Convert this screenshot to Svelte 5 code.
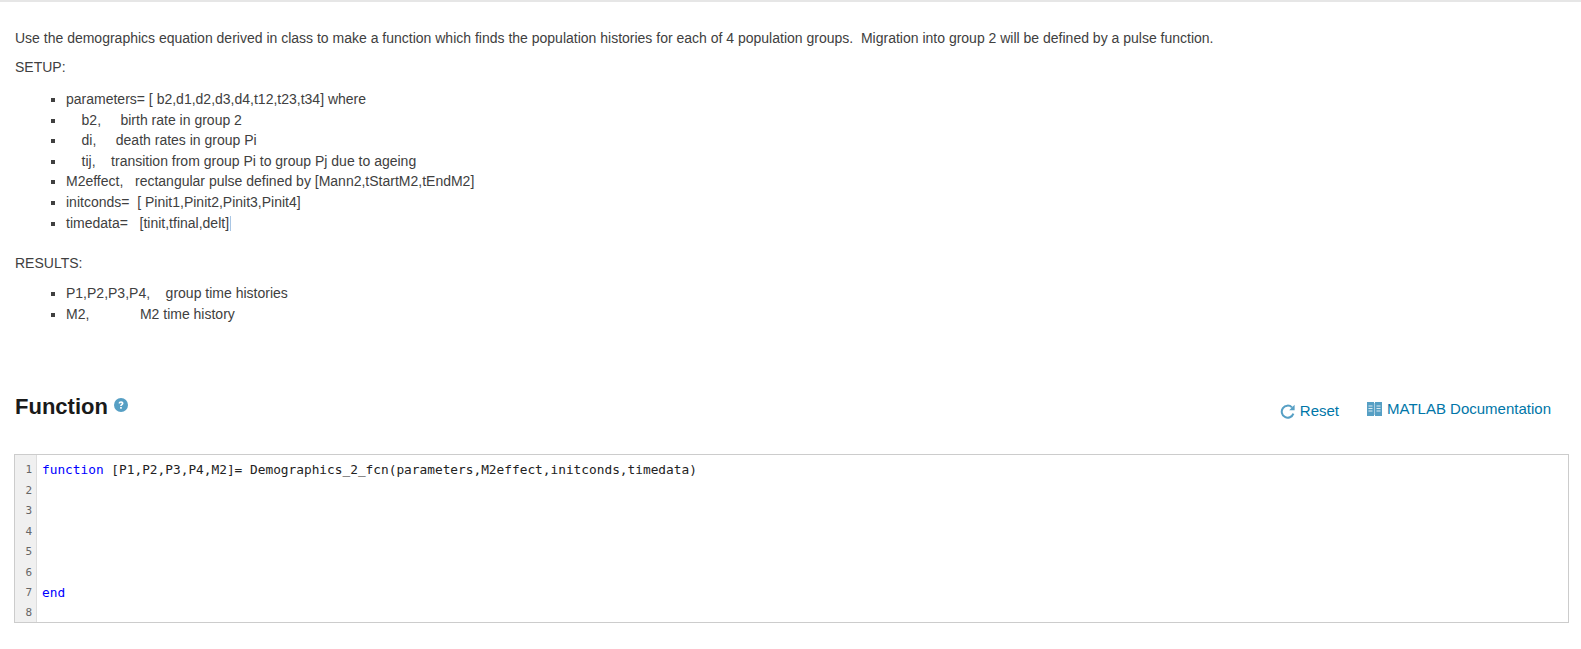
<script>
	const setup = [
		'parameters= [ b2,d1,d2,d3,d4,t12,t23,t34] where',
		'\u00a0\u00a0\u00a0 b2,\u00a0\u00a0\u00a0\u00a0 birth rate in group 2',
		'\u00a0\u00a0\u00a0 di,\u00a0\u00a0\u00a0\u00a0 death rates in group Pi',
		'\u00a0\u00a0\u00a0 tij,\u00a0\u00a0\u00a0 transition from group Pi to group Pj due to ageing',
		'M2effect,\u00a0\u00a0 rectangular pulse defined by [Mann2,tStartM2,tEndM2]',
		'initconds=\u00a0 [ Pinit1,Pinit2,Pinit3,Pinit4]'
	];
	const results = [
		'P1,P2,P3,P4,\u00a0\u00a0\u00a0 group time histories',
		'M2,\u00a0\u00a0\u00a0\u00a0\u00a0\u00a0\u00a0\u00a0\u00a0\u00a0\u00a0\u00a0 M2 time history'
	];
	const lineNumbers = [1, 2, 3, 4, 5, 6, 7, 8];
</script>

<div class="page">
	<div class="description">
		<p class="intro">Use the demographics equation derived in class to make a function which finds the population histories for each of 4 population groups.&nbsp; Migration into group 2 will be defined by a pulse function.</p>
		<p class="label">SETUP:</p>
		<ul>
			{#each setup as item}
				<li>{item}</li>
			{/each}
			<li>timedata=&nbsp;&nbsp; [tinit,tfinal,delt]<span class="caret"></span></li>
		</ul>
		<p class="label results">RESULTS:</p>
		<ul class="results-list">
			{#each results as item}
				<li>{item}</li>
			{/each}
		</ul>
	</div>

	<div class="function-head">
		<h2>Function
			<svg class="help" width="14" height="14" viewBox="0 0 14 14" aria-hidden="true">
				<circle cx="7" cy="7" r="7" fill="#569fc4" />
				<path d="M4.6 5.4c0-1.4 1.1-2.2 2.5-2.2 1.3 0 2.4.8 2.4 2 0 1.8-1.8 1.6-1.8 2.9H6.1c0-2 1.6-1.9 1.6-2.7 0-.4-.3-.7-.7-.7-.5 0-.8.3-.8.9z" fill="#fff" />
				<rect x="6.1" y="9" width="1.7" height="1.7" fill="#fff" />
			</svg>
		</h2>
		<div class="actions">
			<a class="action reset" href="#reset">
				<svg width="15" height="15" viewBox="0 0 15 15" fill="none" aria-hidden="true">
					<path d="M13.4 9.6A6 6 0 1 1 12 3.4" stroke="#569fc4" stroke-width="2" />
					<path d="M14.6 .8v5.4H9.2z" fill="#569fc4" />
				</svg>
				Reset
			</a>
			<a class="action" href="#doc">
				<svg width="15" height="14" viewBox="0 0 15 14" aria-hidden="true">
					<path d="M0 0h7v14H0zM8 0h7v14H8z" fill="#569fc4" />
					<path d="M7 1h1v12H7z" fill="#a9cde0" />
					<path d="M1.5 4h4M1.5 6.5h4M1.5 9h4M9.5 4h4M9.5 6.5h4M9.5 9h4" stroke="#dcebf3" />
				</svg>
				MATLAB Documentation
			</a>
		</div>
	</div>

	<div class="editor">
		<div class="gutter">
			{#each lineNumbers as n}
				<div>{n}</div>
			{/each}
		</div>
		<div class="code">
			<div><span class="kw">function</span> [P1,P2,P3,P4,M2]= Demographics_2_fcn(parameters,M2effect,initconds,timedata)</div>
			<div>&nbsp;</div>
			<div>&nbsp;</div>
			<div>&nbsp;</div>
			<div>&nbsp;</div>
			<div>&nbsp;</div>
			<div><span class="kw">end</span></div>
			<div>&nbsp;</div>
		</div>
	</div>
</div>

<style>
	:global(body) {
		background: #fff;
	}

	.page {
		height: 649px;
		overflow: hidden;
		border-top: 2px solid #e6e6e6;
		box-sizing: border-box;
		font-family: Arial, "Liberation Sans", sans-serif;
		font-size: 14px;
		line-height: 20px;
		color: #404040;
	}

	.description {
		padding: 26px 15px 0;
	}

	p {
		margin: 0;
	}

	.intro {
		margin-bottom: 9px;
	}

	.label.results {
		margin-top: 20px;
	}

	ul {
		list-style: square;
		margin: 12px 0 0;
		padding-left: 51px;
		line-height: 20.6px;
	}

	.results-list {
		margin-top: 10px;
	}

	.caret {
		display: inline-block;
		width: 1px;
		height: 15px;
		margin-left: 1px;
		vertical-align: -3px;
		background: #a9c6e4;
	}

	.function-head {
		display: flex;
		justify-content: space-between;
		align-items: flex-start;
		margin-top: 68px;
		padding: 0 30px 0 15px;
	}

	h2 {
		margin: 0;
		font-size: 22px;
		line-height: 30px;
		font-weight: 700;
		color: #1a1a1a;
	}

	.help {
		vertical-align: 2px;
	}

	.actions {
		display: flex;
		align-items: flex-start;
		gap: 28px;
		font-size: 15px;
		padding-top: 7px;
	}

	.action {
		display: flex;
		align-items: center;
		gap: 5px;
		color: #0076a8;
		text-decoration: none;
	}

	.reset {
		margin-top: 2px;
	}

	.editor {
		display: flex;
		height: 169px;
		box-sizing: border-box;
		overflow: hidden;
		margin: 32px 12px 0 14px;
		border: 1px solid #ccc;
		font-family: "DejaVu Sans Mono", monospace;
		font-size: 12.8px;
		line-height: 20.43px;
	}

	.gutter {
		width: 22px;
		padding: 5px 4px 0 0;
		background: #f0f0f0;
		border-right: 1px solid #ddd;
		color: #666;
		text-align: right;
		box-sizing: border-box;
		font-size: 11px;
	}

	.code {
		flex: 1;
		padding: 5px 0 0 5px;
		color: #222;
	}

	.kw {
		color: #0000ff;
	}
</style>
